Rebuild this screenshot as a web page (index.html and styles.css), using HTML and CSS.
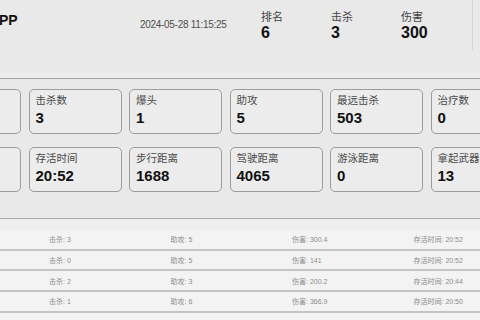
FILE: index.html
```html
<!DOCTYPE html>
<html lang="zh">
<head>
  <meta charset="UTF-8"/>
  <title>对局详情</title>
  <link rel="stylesheet" href="styles.css">
</head>
<body>

<div class="header">
  <div class="name">PP</div>
  <div class="time">2024-05-28 11:15:25</div>
  <div class="stats">
    <div class="stat"><span class="stat-label">排名</span><span class="stat-value">6</span></div>
    <div class="stat"><span class="stat-label">击杀</span><span class="stat-value">3</span></div>
    <div class="stat"><span class="stat-label">伤害</span><span class="stat-value">300</span></div>
  </div>
  <div class="divider"></div>
</div>

<div class="detail">
  <div class="cards">
    <div class="card"></div>
    <div class="card"><div class="card-label">击杀数</div><div class="card-value">3</div></div>
    <div class="card"><div class="card-label">爆头</div><div class="card-value">1</div></div>
    <div class="card"><div class="card-label">助攻</div><div class="card-value">5</div></div>
    <div class="card"><div class="card-label">最远击杀</div><div class="card-value">503</div></div>
    <div class="card"><div class="card-label">治疗数</div><div class="card-value">0</div></div>
    <div class="card"></div>
    <div class="card"><div class="card-label">存活时间</div><div class="card-value">20:52</div></div>
    <div class="card"><div class="card-label">步行距离</div><div class="card-value">1688</div></div>
    <div class="card"><div class="card-label">驾驶距离</div><div class="card-value">4065</div></div>
    <div class="card"><div class="card-label">游泳距离</div><div class="card-value">0</div></div>
    <div class="card"><div class="card-label">拿起武器</div><div class="card-value">13</div></div>
  </div>
</div>

<div class="list">
  <div class="row"><span></span><span>击杀: 3</span><span>助攻: 5</span><span>伤害: 300.4</span><span>存活时间: 20:52</span></div>
  <div class="row"><span></span><span>击杀: 0</span><span>助攻: 5</span><span>伤害: 141</span><span>存活时间: 20:52</span></div>
  <div class="row"><span></span><span>击杀: 2</span><span>助攻: 3</span><span>伤害: 200.2</span><span>存活时间: 20:44</span></div>
  <div class="row"><span></span><span>击杀: 1</span><span>助攻: 6</span><span>伤害: 366.9</span><span>存活时间: 20:50</span></div>
  <div class="row"><span></span><span></span><span></span><span></span><span></span></div>
</div>

</body>
</html>
```

FILE: styles.css
```css
:root {
  --fondo: #e9e9e9;
  --borde: #9c9c9c;
  --texto: #111111;
  --gris: #4a4a4a;
}
* {
  margin: 0; padding: 0; box-sizing: border-box;
}
body {
  width: 480px;
  height: 320px;
  overflow: hidden;
  background: var(--fondo);
  color: var(--texto);
  font-family: "Liberation Sans", "Noto Sans CJK SC", sans-serif;
}
.header {
  display: flex;
  align-items: flex-start;
  height: 79px;
  border-bottom: 1px solid #a2a2a2;
  box-shadow: inset 0 -5px 0 #ededed;
}
.name {
  width: 141px;
  margin-top: 12px;
  margin-left: -1px;
  font-size: 14px;
  line-height: 16px;
  font-weight: bold;
}
.time {
  width: 121px;
  margin-top: 19px;
  font-size: 10px;
  line-height: 12px;
  letter-spacing: -0.3px;
  color: #4d4d4d;
}
.stats {
  display: flex;
  margin-top: 11px;
}
.stat {
  display: flex;
  flex-direction: column;
  width: 70px;
}
.stat-label {
  font-size: 11px;
  line-height: 13px;
  color: #444;
}
.stat-value {
  font-size: 16px;
  line-height: 18px;
  font-weight: bold;
}
.divider {
  width: 1px;
  height: 50px;
  margin-left: 1px;
  background: #d6d6d6;
}
.detail {
  padding: 10px 0 26px;
  border-bottom: 1px solid #a8a8a8;
  overflow: hidden;
}
.cards {
  display: grid;
  grid-template-columns: repeat(6, 93px);
  grid-auto-rows: 45px;
  column-gap: 7.5px;
  row-gap: 13px;
  margin-left: -72px;
}
.card {
  border: 1px solid var(--borde);
  border-radius: 5px;
  background: #ececec;
  padding: 3px 6px;
}
.card-label {
  font-size: 10.5px;
  line-height: 14px;
  color: var(--gris);
}
.card-value {
  margin-top: 2px;
  font-size: 15px;
  line-height: 17px;
  font-weight: bold;
}
.list {
  padding-top: 11px;
  background: #eeeeee;
}
.row {
  display: grid;
  grid-template-columns: repeat(5, 121.5px);
  align-items: center;
  height: 20.7px;
  margin-left: -72.5px;
  background: #f3f3f3;
  border-bottom: 2px solid #c3c3c3;
  font-size: 7px;
  color: #8c8c8c;
}
```
